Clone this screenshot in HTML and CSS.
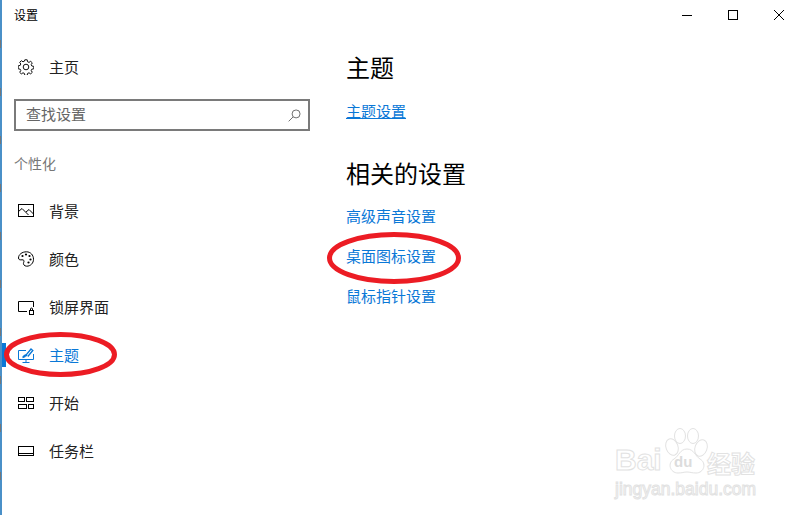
FILE: index.html
```html
<!DOCTYPE html>
<html lang="zh-CN">
<head>
<meta charset="utf-8">
<title>设置</title>
<link rel="stylesheet" href="styles.css">
</head>
<body>
<div class="window">
  <header class="titlebar">
    <span class="title">设置</span>
    <div class="controls">
      <svg class="ctl" width="46" height="30" viewBox="0 0 46 30"><path d="M18 15.500h10" stroke="#000" stroke-width="1"/></svg>
      <svg class="ctl" width="46" height="30" viewBox="0 0 46 30"><rect x="18.500" y="10.500" width="9" height="9" fill="none" stroke="#000"/></svg>
      <svg class="ctl" width="46" height="30" viewBox="0 0 46 30"><path d="M18 10l10 10M28 10L18 20" stroke="#000" fill="none"/></svg>
    </div>
  </header>
  <div class="content">
    <aside class="sidebar">
      <a class="nav home">
        <svg class="ico" viewBox="0 0 16 16" fill="none" stroke="#111"><circle cx="8" cy="8" r="2.800"/><path d="M6.800.8h2.400l.4 2 1.400.6 1.700-1.100 1.600 1.600-1.100 1.700.6 1.400 2 .4v2.400l-2 .4-.6 1.400 1.100 1.700-1.600 1.600-1.700-1.100-1.400.6-.4 2H6.800l-.4-2-1.400-.6-1.700 1.100-1.600-1.600 1.100-1.700-.6-1.400-2-.4V6.800l2-.4.6-1.400-1.100-1.700 1.600-1.600 1.700 1.100 1.400-.6z"/></svg>
        <span>主页</span>
      </a>
      <div class="search">
        <span class="placeholder">查找设置</span>
        <svg class="search-ico" viewBox="0 0 14 14" fill="none" stroke="#666"><circle cx="8.700" cy="5.300" r="4.300"/><path d="M5.500 8.500L.7 13.300"/></svg>
      </div>
      <div class="group">个性化</div>
      <nav class="list">
        <a class="nav">
          <svg class="ico" viewBox="0 0 16 16" fill="none" stroke="#000"><rect x=".5" y="1.500" width="15" height="12"/><path d="M.5 8.500l3.500-3 6.500 6.500M8 9l3-2.500 4.500 4.500"/></svg>
          <span>背景</span>
        </a>
        <a class="nav">
          <svg class="ico" viewBox="0 0 16 16" fill="none" stroke="#000"><path d="M8.500.8C4 .8.500 3.500.500 7c0 2 2 2 3.500 1.800 1.800-.2 2.500 1 1.700 2.500-.8 1.700.3 3.900 3 3.900 3.800 0 6.800-3 6.800-6.900C15.500 4 12.500.8 8.500.8z"/><g fill="#000" stroke="none"><circle cx="4.500" cy="5" r="1.100"/><circle cx="8" cy="3.500" r="1.100"/><circle cx="11.500" cy="5" r="1.100"/><circle cx="12.500" cy="8.500" r="1.100"/><circle cx="10.500" cy="11.500" r="1.100"/></g></svg>
          <span>颜色</span>
        </a>
        <a class="nav">
          <svg class="ico" viewBox="0 0 16 16" fill="none" stroke="#000"><path d="M9 12.500H.5v-10h15V8"/><rect x="11.500" y="11.500" width="4" height="4"/><path d="M12.500 11.500V10a1 1 0 0 1 2 0v1.500"/></svg>
          <span>锁屏界面</span>
        </a>
        <a class="nav active">
          <svg class="ico" viewBox="0 0 16 16" fill="none" stroke="#0a78d7"><path d="M8 3.500H.5v9h15V7M8 12.500v2.500M4.500 15.500h7"/><path d="M4.500 10.500c2-.3 3-1 3.500-2.500l5-6 1.800 1.500-5 6" stroke-width="1.300"/><path d="M5 10c1-1 1.500-1.700 3-2l1 1" stroke-width="1.500"/></svg>
          <span>主题</span>
        </a>
        <a class="nav">
          <svg class="ico" viewBox="0 0 16 16" fill="none" stroke="#000"><rect x=".5" y="2.500" width="6" height="4"/><rect x="8.500" y="2.500" width="7" height="4"/><rect x=".5" y="9.500" width="8" height="4"/><rect x="10.500" y="9.500" width="5" height="4"/></svg>
          <span>开始</span>
        </a>
        <a class="nav">
          <svg class="ico" viewBox="0 0 16 16" fill="none" stroke="#000"><rect x=".5" y="3.500" width="15" height="9"/><path d="M.5 10.500h15"/></svg>
          <span>任务栏</span>
        </a>
      </nav>
    </aside>
    <main class="main">
      <h2 class="h-first">主题</h2>
      <a class="link under">主题设置</a>
      <h2 class="h-second">相关的设置</h2>
      <div class="links">
        <a class="link">高级声音设置</a>
        <a class="link">桌面图标设置</a>
        <a class="link">鼠标指针设置</a>
      </div>
    </main>
  </div>
</div>
<div class="edge"></div>
<svg class="marks" width="802" height="515" viewBox="0 0 802 515" fill="none" stroke="#ec1c24" stroke-width="5">
  <ellipse cx="60.500" cy="354.500" rx="54" ry="20"/>
  <ellipse cx="394" cy="258" rx="64.500" ry="23.500"/>
</svg>
<div class="wm">
  <svg class="paw" width="60" height="50" viewBox="0 0 60 50" fill="#fff" stroke="#e2e2e2">
    <ellipse cx="9" cy="19" rx="6" ry="8.500" transform="rotate(-20 9 19)"/>
    <ellipse cx="17" cy="8" rx="5.500" ry="7.500"/>
    <ellipse cx="30" cy="8" rx="5.500" ry="7.500"/>
    <ellipse cx="38" cy="20" rx="6" ry="8.500" transform="rotate(20 38 20)"/>
    <path d="M24 21c-7 0-8 7-13 10-7 4-4 14 4 14 4 0 6-1 9-1s5 1 9 1c8 0 11-10 4-14-5-3-6-10-13-10z"/>
  </svg>
  <span class="wm-bai">Bai</span><span class="wm-du">du</span><span class="wm-cn">经验</span>
  <div class="wm-url">jingyan.baidu.com</div>
</div>
</body>
</html>
```
FILE: styles.css
```css
* { box-sizing: border-box; }
html, body { margin: 0; padding: 0; }
body {
  width: 802px;
  height: 515px;
  overflow: hidden;
  background: #fff;
  font-family: "Noto Sans CJK SC", "Noto Sans", sans-serif;
  position: relative;
}
.window {
  height: 515px;
  border-left: 2px solid #4a90c8;
  display: flex;
  flex-direction: column;
  color: #000;
}
.edge {
  position: absolute;
  left: 0;
  top: 0;
  width: 1px;
  height: 515px;
  background: repeating-linear-gradient(to bottom, #4a90c8 0 40px, #777 40px 48px);
}
.titlebar {
  height: 30px;
  display: flex;
  justify-content: space-between;
  align-items: center;
  padding-left: 12px;
}
.title { font-size: 12px; line-height: 29px; height: 30px; }
.controls { display: flex; }
.ctl { display: block; }
.content { flex: 1; display: flex; }
.sidebar { width: 344px; }
.nav {
  display: flex;
  align-items: center;
  height: 48px;
  padding-left: 16px;
  font-size: 15px;
  color: #222;
  position: relative;
}
.nav span { margin-left: 15px; line-height: 47px; height: 48px; }
.ico { width: 16px; height: 16px; flex: none; }
.home { height: 24px; margin-top: 25px; }
.home span { line-height: 23px; height: 24px; }
.search {
  margin: 20px 0 0 12px;
  width: 296px;
  height: 32px;
  border: 2px solid #7a7a7a;
  display: flex;
  align-items: center;
  justify-content: space-between;
  padding: 0 7px 0 10px;
}
.placeholder { font-size: 15px; color: #666; line-height: 26px; height: 28px; }
.search-ico { width: 13px; height: 13px; }
.group { margin: 22px 0 0 12px; font-size: 14px; line-height: 20px; color: #777; }
.list { margin-top: 14px; }
.active, .active span { color: #0a78d7; }
.active::before {
  content: "";
  position: absolute;
  left: 0;
  top: 12px;
  width: 4px;
  height: 24px;
  background: #0a78d7;
}
.main { display: flex; flex-direction: column; align-items: flex-start; }
h2 { margin: 0; font-size: 24px; font-weight: 400; line-height: 32px; color: #000; }
.h-first { margin-top: 21px; }
.h-second { margin-top: 36px; }
.link { font-size: 15px; line-height: 20px; color: #0a78d7; }
.h-first + .link { margin-top: 18px; }
.under { text-decoration: underline; }
.links { display: flex; flex-direction: column; gap: 20px; margin-top: 17px; }
.marks { position: absolute; left: 0; top: 0; pointer-events: none; }
.wm { position: absolute; left: 614px; top: 428px; width: 150px; height: 80px; color: #fff; }
.paw { position: absolute; left: 49px; top: 0; }
.wm-bai, .wm-du, .wm-cn, .wm-url {
  position: absolute;
  font-family: "Liberation Sans", sans-serif;
  font-weight: 700;
  -webkit-text-stroke: 1px #e2e2e2;
}
.wm-bai { left: 1px; top: 15px; font-size: 30px; line-height: 34px; }
.wm-du { left: 60px; top: 24px; font-size: 15px; line-height: 20px; -webkit-text-stroke: 0; color: #dcdcdc; }
.wm-cn { left: 93px; top: 20px; font-size: 24px; line-height: 30px; font-family: "Noto Sans CJK SC", sans-serif; }
.wm-url { left: 1px; top: 50px; font-size: 17.500px; line-height: 22px; font-weight: 400; white-space: nowrap; }
```
